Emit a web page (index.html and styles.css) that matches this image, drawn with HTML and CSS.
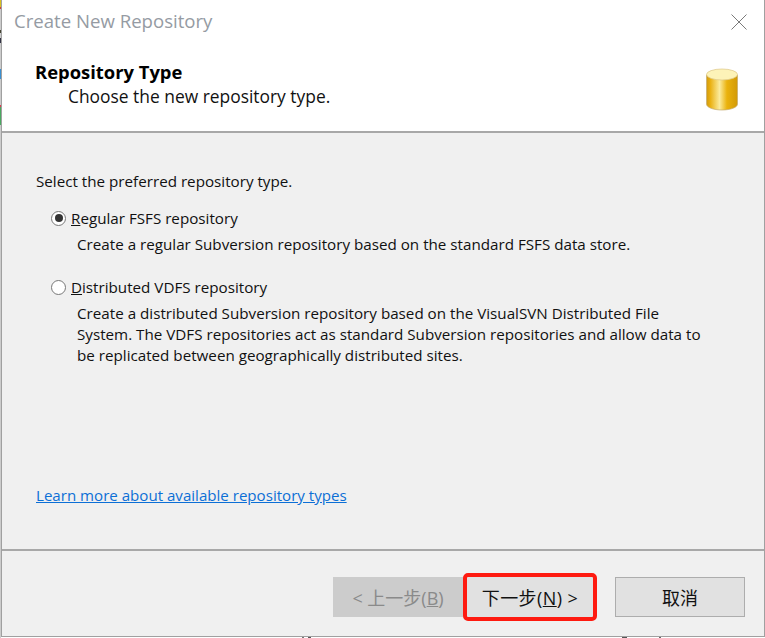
FILE: index.html
```html
<!DOCTYPE html>
<html lang="en">
<head>
<meta charset="utf-8">
<title>Create New Repository</title>
<link rel="stylesheet" href="styles.css">
</head>
<body>
<div class="window">
  <div class="titlebar">
    <span class="title">Create New Repository</span>
    <svg class="close" width="16" height="16" viewBox="0 0 16 16"><path d="M.5.5l15 15M15.500.5l-15 15" stroke="#7a7a7a" stroke-width="1" fill="none"/></svg>
  </div>
  <div class="header">
    <div class="header-text">
      <div class="header-title">Repository Type</div>
      <div class="header-sub">Choose the new repository type.</div>
    </div>
    <svg class="db" width="32" height="43" viewBox="0 0 32 43">
      <defs>
        <linearGradient id="body" x1="0" x2="1" y1="0" y2="0">
          <stop offset="0" stop-color="#d09a10"/>
          <stop offset=".12" stop-color="#eab010"/>
          <stop offset=".42" stop-color="#fbeb9c"/>
          <stop offset=".66" stop-color="#eab20c"/>
          <stop offset="1" stop-color="#d29a08"/>
        </linearGradient>
      </defs>
      <path d="M.5 7v29c0 3.500 7 6 15.500 6s15.500-2.500 15.500-6V7z" fill="url(#body)" stroke="#c4aa70" stroke-width=".7"/>
      <ellipse cx="16" cy="6.500" rx="15.500" ry="5.500" fill="#fdf3b8" stroke="#dcc684" stroke-width=".7"/>
    </svg>
  </div>
  <div class="content">
    <p class="intro">Select the preferred repository type.</p>
    <div class="option">
      <div class="option-label"><span class="radio checked"></span><span><u>R</u>egular FSFS repository</span></div>
      <p class="option-desc">Create a regular Subversion repository based on the standard FSFS data store.</p>
    </div>
    <div class="option">
      <div class="option-label"><span class="radio"></span><span><u>D</u>istributed VDFS repository</span></div>
      <p class="option-desc">Create a distributed Subversion repository based on the VisualSVN Distributed File<br>System. The VDFS repositories act as standard Subversion repositories and allow data to<br>be replicated between geographically distributed sites.</p>
    </div>
    <a class="learn" href="#">Learn more about available repository types</a>
  </div>
  <div class="footer">
    <button class="btn disabled">&lt; 上一步(<u>B</u>)</button>
    <button class="btn next">下一步(<u>N</u>) &gt;</button>
    <button class="btn cancel">取消</button>
  </div>
</div>
</body>
</html>
```
FILE: styles.css
```css
* { box-sizing: border-box; }
html, body { margin: 0; height: 100%; overflow: hidden; }
html {
  background-color: #fff;
  background-image:
    linear-gradient(to bottom, #d8c020 0 7px, #d04040 7px 9px, #ccc 9px 30px, #443 30px 33px, #ccc 33px 38px, #334 38px 43px, #ccc 43px 69px, #3a8fd0 69px 79px, #ccc 79px 105px, #d84050 105px 107px, #4aa860 107px 125px, #ccc 125px 100%),
    linear-gradient(to right, #fff 0 302px, #777 302px 304px, #fff 304px 308px, #555 308px 311px, #fff 311px 622px, #555 622px 627px, #fff 627px 659px, #666 659px 661px, #fff 661px);
  background-size: 1px 100%, 100% 1px;
  background-position: left top, left bottom;
  background-repeat: no-repeat;
}
body { font-family: "Open Sans", "Noto Sans CJK SC", sans-serif; font-size: 15.200px; color: #111; }
.window {
  width: 764px; height: 637px; margin-left: 1px;
  border-left: 1px solid #a0a0a0; border-right: 1px solid #a0a0a0; border-bottom: 1px solid #a0a0a0;
  display: flex; flex-direction: column; background: #f0f0f0;
}
.titlebar {
  height: 44px; background: #fff; display: flex; align-items: center; justify-content: space-between;
  padding: 0 16px 0 12px;
}
.title { font-size: 18.600px; color: #959ba3; margin-top: -3px; }
.close { margin-top: -1px; margin-right: 1px; }
.header {
  height: 89px; background: #fff; border-bottom: 2px solid #a8a8a8;
  display: flex; justify-content: space-between; align-items: flex-start; padding: 0 26px 0 33px;
}
.header-title { font-weight: 700; font-size: 18.400px; line-height: 22px; margin-top: 17px; color: #000; }
.header-sub { font-size: 17.400px; line-height: 24px; padding-left: 33px; margin-top: 1px; color: #111; }
.db { margin-top: 24px; }
.content { flex: 1; padding: 38px 0 0 34px; display: flex; flex-direction: column; border-bottom: 2px solid #a8a8a8; }
.intro { margin: 0; line-height: 20px; }
.option { margin-top: 17px; }
.option + .option { margin-top: 22px; }
.option-label { display: flex; align-items: center; padding-left: 15px; line-height: 20px; gap: 5px; }
.radio { width: 15px; height: 15px; border-radius: 50%; border: 1px solid #777; background: #fff; display: flex; align-items: center; justify-content: center; }
.radio.checked::after { content: ""; width: 8px; height: 8px; border-radius: 50%; background: #333; }
.option-desc { margin: 6px 0 0 41px; line-height: 21px; }
.learn { margin-top: auto; margin-bottom: 44px; font-size: 15.100px; color: #0c6fd6; text-decoration: underline; line-height: 20px; align-self: flex-start; }
.footer { height: 85px; flex: none; display: flex; justify-content: flex-end; align-items: flex-start; padding: 26px 19px 0 0; }
.btn {
  width: 130px; height: 40px; font: inherit; font-size: 18px; color: #111;
  background: #e1e1e1; border: 1px solid #adadad; padding: 0;
}
.btn.disabled { background: #ccc; border-color: #ccc; color: #8a8a8a; }
.btn.next { border: 4px solid #fe1a10; border-radius: 5px; width: 134px; height: 48px; margin-top: -4px; letter-spacing: .4px; }
.cancel { margin-left: 18px; }
```
